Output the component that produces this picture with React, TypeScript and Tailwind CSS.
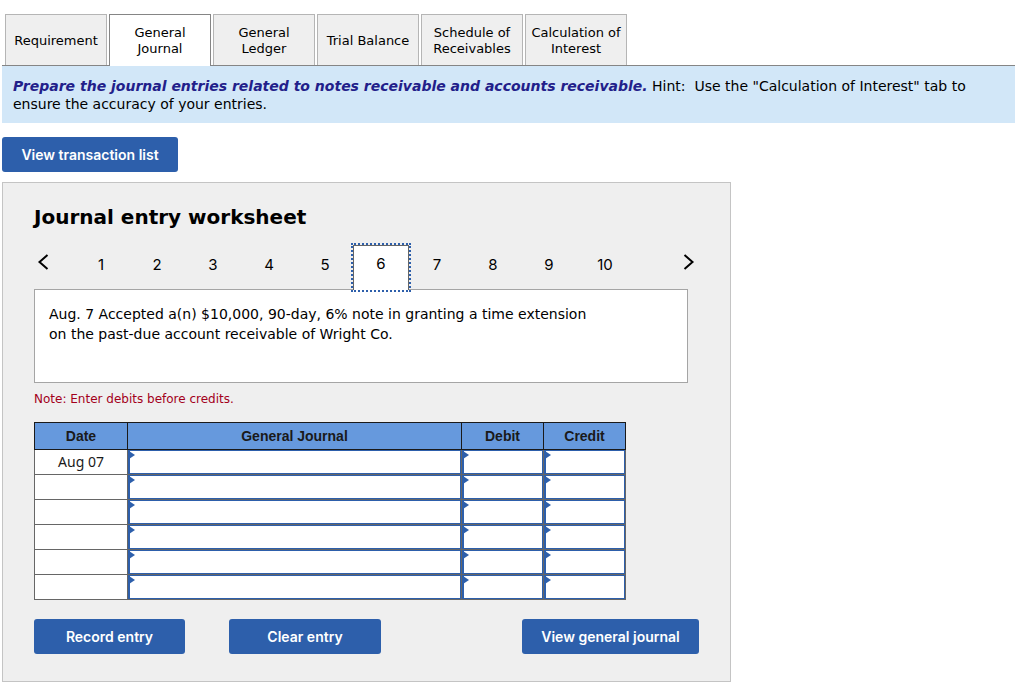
import { useState } from "react"

const tabs = [
  "Requirement",
  "General Journal",
  "General Ledger",
  "Trial Balance",
  "Schedule of Receivables",
  "Calculation of Interest",
]

const entries = [1, 2, 3, 4, 5, 6, 7, 8, 9, 10]
const rows = ["Aug 07", "", "", "", "", ""]
const columns = ["General Journal", "Debit", "Credit"]

const blueButton =
  "h-[35px] rounded-[3px] bg-[#2d5fab] font-[Inter,sans-serif] text-sm font-semibold text-white"

function Chevron({ next }: { next?: boolean }) {
  return (
    <svg width="12" height="16" viewBox="0 0 12 16" fill="none" stroke="#000" strokeWidth="2">
      <path d={next ? "M1.5 1 L9.5 8 L1.5 15" : "M10.5 1 L2.5 8 L10.5 15"} />
    </svg>
  )
}

function EntryCell({ label }: { label: string }) {
  return (
    <td className="relative border border-[#666] p-0">
      <input
        aria-label={label}
        className="block h-6 w-full border border-[#2d5fab] border-l-2 bg-white px-3 text-sm outline-none"
      />
      <svg className="pointer-events-none absolute top-0 left-0" width="7" height="9" viewBox="0 0 7 9">
        <path d="M1 1 L7 5 L1 9 Z" fill="#2d5fab" />
      </svg>
    </td>
  )
}

function JournalTable() {
  return (
    <table className="mt-[13px] w-full max-w-[592px] table-fixed border-collapse bg-white font-[Liberation_Sans,Arial,sans-serif]">
      <colgroup>
        <col className="w-[93px]" />
        <col />
        <col className="w-[82px]" />
        <col className="w-[82px]" />
      </colgroup>
      <thead>
        <tr className="h-[27px] bg-[#6699dd] text-sm text-[#1a1a1a]">
          {["Date", ...columns].map((name) => (
            <th key={name} className="border border-[#1a1a1a] p-0 font-bold">
              {name}
            </th>
          ))}
        </tr>
      </thead>
      <tbody>
        {rows.map((date, i) => (
          <tr key={i} className="h-[25px]">
            <td className="border border-[#666] p-0 text-center font-[Noto_Sans,sans-serif] text-sm leading-6 text-[#1a1a1a]">
              {date}
            </td>
            {columns.map((name) => (
              <EntryCell key={name} label={`${name}, row ${i + 1}`} />
            ))}
          </tr>
        ))}
      </tbody>
    </table>
  )
}

export default function App() {
  const [tab, setTab] = useState("General Journal")
  const [entry, setEntry] = useState(6)

  return (
    <main className="min-h-screen bg-white pt-3.5 pr-[9px] pb-4 pl-0.5 font-[DejaVu_Sans,Verdana,sans-serif] text-black">
      <div className="flex gap-0.5 border-b border-[#858585] pl-[3px]">
        {tabs.map((name) => (
          <button
            key={name}
            onClick={() => setTab(name)}
            className={
              name === tab
                ? "-mb-px h-[52px] w-[102px] border border-b-0 border-[#858585] bg-white text-[13px] leading-4"
                : "h-[51px] w-[102px] border border-b-0 border-[#b5b5b5] bg-[#efefef] pt-px text-[13px] leading-4"
            }
          >
            {name}
          </button>
        ))}
      </div>

      <p className="bg-[#d2e7f8] px-[11px] pt-[11px] pb-2.5 text-sm leading-[18px]">
        <strong className="text-[#22208a] italic">
          Prepare the journal entries related to notes receivable and accounts receivable.
        </strong>{" "}
        Hint: &nbsp;Use the "Calculation of Interest" tab to ensure the accuracy of your entries.
      </p>

      <button className={`${blueButton} mt-3.5 w-[176px]`}>View transaction list</button>

      <section className="mt-2.5 w-full max-w-[729px] border border-[#c4c4c4] bg-[#efefef] px-[31px] pt-5 pb-[27px]">
        <h1 className="text-xl leading-7 font-bold">Journal entry worksheet</h1>

        <nav className="mt-3.5 flex items-start font-[Inter,sans-serif]">
          <button aria-label="Previous entry" className="w-[39px] pt-[9px] pl-[3px]">
            <Chevron />
          </button>
          {entries.map((n) => (
            <button
              key={n}
              onClick={() => setEntry(n)}
              className={
                n === entry
                  ? "relative -mb-px h-[45px] w-14 border border-b-0 border-[#666] bg-white pb-2 text-[15px] outline-2 outline-[#2d5fab] outline-dotted"
                  : "h-[44px] w-14 pb-1 text-[15px]"
              }
            >
              {n}
            </button>
          ))}
          <button aria-label="Next entry" className="mr-1 ml-auto pt-[9px]">
            <Chevron next />
          </button>
        </nav>

        <div className="min-h-[94px] w-full max-w-[654px] border border-[#a5a5a5] bg-white px-3.5 pt-3.5 text-sm leading-5">
          <p className="max-w-[550px]">
            Aug. 7 Accepted a(n) $10,000, 90-day, 6% note in granting a time extension on the
            past-due account receivable of Wright Co.
          </p>
        </div>

        <p className="mt-1.5 text-xs leading-5 text-[#a3001b]">Note: Enter debits before credits.</p>

        <JournalTable />

        <div className="mt-[19px] flex">
          <button className={`${blueButton} w-[151px]`}>Record entry</button>
          <button className={`${blueButton} ml-11 w-[152px]`}>Clear entry</button>
          <button className={`${blueButton} ml-auto w-[177px]`}>View general journal</button>
        </div>
      </section>
    </main>
  )
}
